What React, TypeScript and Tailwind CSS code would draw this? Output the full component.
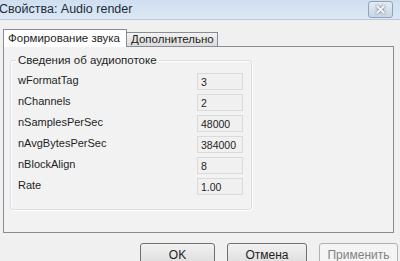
import { X } from 'lucide-react'

const rows = [
  { label: 'wFormatTag', value: '3' },
  { label: 'nChannels', value: '2' },
  { label: 'nSamplesPerSec', value: '48000' },
  { label: 'nAvgBytesPerSec', value: '384000' },
  { label: 'nBlockAlign', value: '8' },
  { label: 'Rate', value: '1.00' },
]

export default function App() {
  return (
    <div className="w-[400px] h-[261px] overflow-hidden bg-[#f0f0f0] flex flex-col font-['Liberation_Sans',sans-serif] text-[#1e1e1e] whitespace-nowrap">
      {/* title bar */}
      <div className="shrink-0 h-[20px] flex items-start justify-between bg-gradient-to-b from-[#cfdff0] to-[#dce8f5] border-b border-[#b9c9da]">
        <span className="ml-[-1px] mt-[2px] text-[12.5px] leading-[15px] text-[#1f2a38]">Свойства: Audio render</span>
        <div className="mt-[1px] mr-[7px] w-[25px] h-[17px] rounded-[3px] border border-[#8fa3ba] bg-gradient-to-b from-[#e3ebf4] to-[#c9d6e5] flex items-center justify-center">
          <X size={13} strokeWidth={3.5} className="text-[#f4f6f9] drop-shadow-[0_0_1px_#55606e]" />
        </div>
      </div>

      {/* tabs */}
      <div className="shrink-0 mt-[8px] ml-[3px] h-[18px] flex items-end">
        <div className="h-[18px] w-[124px] bg-white border border-b-0 border-[#898c95] text-[11.5px] leading-[16px] pl-[4px] relative top-[1px] z-10">
          Формирование звука
        </div>
        <div className="h-[14px] w-[91px] bg-gradient-to-b from-[#f2f2f2] to-[#dcdcdc] border border-l-0 border-b-0 border-[#898c95] text-[11.5px] leading-[13px] pl-[4px]">
          Дополнительно
        </div>
      </div>

      {/* panel */}
      <div className="shrink-0 ml-[3px] w-[391px] h-[187px] border border-[#898c95] bg-[#f2f2f2] pl-[6px] pt-[13px]">
        <div className="relative w-[242px] h-[150px] border border-[#d5dfe5] rounded-[3px] shadow-[inset_1px_1px_0_#ffffff,1px_1px_0_#ffffff]">
          <span className="absolute left-[5px] top-[-9px] px-[2px] bg-[#f2f2f2] text-[11.5px] leading-[16px]">
            Сведения об аудиопотоке
          </span>
          <div className="flex flex-col gap-[4px] pt-[12px] pl-[7px] text-[11px]">
            {rows.map((r) => (
              <div key={r.label} className="flex items-center h-[17px]">
                <span className="w-[179px] -mt-[3px]">{r.label}</span>
                <div className="w-[46px] h-[17px] border border-[#dadada] bg-[#f0f0f0] pl-[3px] leading-[16px] text-[10.5px] text-[#1e1e1e]">
                  {r.value}
                </div>
              </div>
            ))}
          </div>
        </div>
      </div>

      {/* buttons */}
      <div className="shrink-0 mt-[10px] flex gap-[12px] pl-[140px] text-[12px]">
        <button className="w-[75px] h-[23px] rounded-[3px] border border-[#707070] bg-gradient-to-b from-[#f2f2f2] to-[#dcdcdc] leading-[20px]">OK</button>
        <button className="w-[80px] h-[23px] rounded-[3px] border border-[#707070] bg-gradient-to-b from-[#f2f2f2] to-[#dcdcdc] leading-[20px]">Отмена</button>
        <button className="w-[79px] h-[23px] rounded-[3px] border border-[#adb2b5] bg-[#f4f4f4] text-[#838383] leading-[20px]">Применить</button>
      </div>
    </div>
  )
}
